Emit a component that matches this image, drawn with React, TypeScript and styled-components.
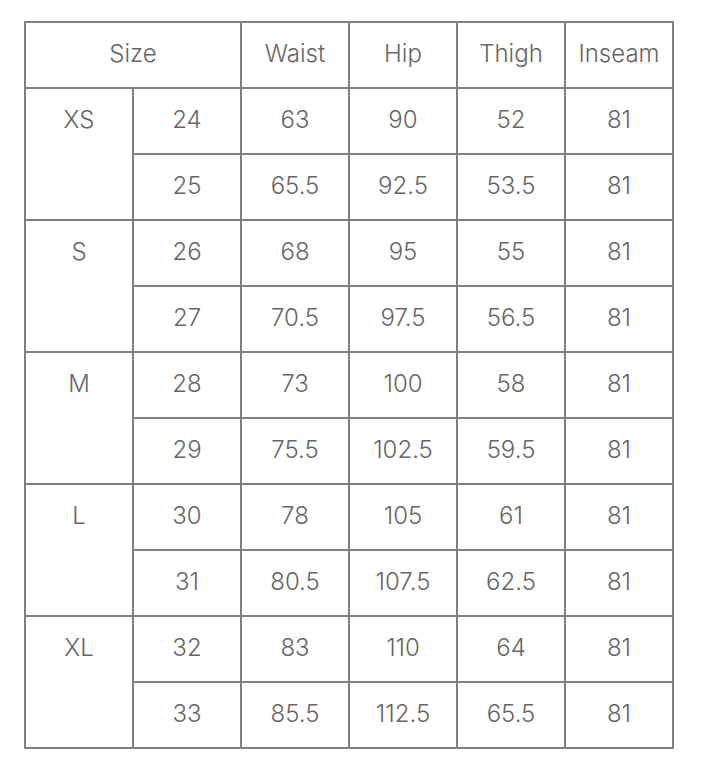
import React from 'react';
import styled, { createGlobalStyle } from 'styled-components';

const GlobalStyle = createGlobalStyle`
  html, body {
    margin: 0;
    padding: 0;
    background: #ffffff;
  }
  body {
    font-family: Inter, "Open Sans", sans-serif;
  }
`;

const Page = styled.div`
  padding: 21px 0 0 24px;
`;

const SizeTable = styled.table`
  border-collapse: separate;
  border-spacing: 0;
  border-top: 2px solid #808080;
  border-left: 2px solid #808080;
  table-layout: fixed;
  width: 650px;
`;

const Col = styled.col`
  width: 108px;
`;

const Cell = styled.td`
  height: 62px;
  padding: 0 0 2px 0;
  box-sizing: content-box;
  border-right: 2px solid #808080;
  border-bottom: 2px solid #808080;
  text-align: center;
  vertical-align: top;
  font-size: 24px;
  line-height: 62px;
  font-weight: 300;
  color: #666666;
  white-space: nowrap;
`;

const HeadCell = styled(Cell).attrs({ as: 'th' })`
  font-weight: 300;
`;

type Row = { fit: number; waist: string; hip: string; thigh: string; inseam: string };

const groups: { label: string; rows: Row[] }[] = [
  {
    label: 'XS',
    rows: [
      { fit: 24, waist: '63', hip: '90', thigh: '52', inseam: '81' },
      { fit: 25, waist: '65.5', hip: '92.5', thigh: '53.5', inseam: '81' },
    ],
  },
  {
    label: 'S',
    rows: [
      { fit: 26, waist: '68', hip: '95', thigh: '55', inseam: '81' },
      { fit: 27, waist: '70.5', hip: '97.5', thigh: '56.5', inseam: '81' },
    ],
  },
  {
    label: 'M',
    rows: [
      { fit: 28, waist: '73', hip: '100', thigh: '58', inseam: '81' },
      { fit: 29, waist: '75.5', hip: '102.5', thigh: '59.5', inseam: '81' },
    ],
  },
  {
    label: 'L',
    rows: [
      { fit: 30, waist: '78', hip: '105', thigh: '61', inseam: '81' },
      { fit: 31, waist: '80.5', hip: '107.5', thigh: '62.5', inseam: '81' },
    ],
  },
  {
    label: 'XL',
    rows: [
      { fit: 32, waist: '83', hip: '110', thigh: '64', inseam: '81' },
      { fit: 33, waist: '85.5', hip: '112.5', thigh: '65.5', inseam: '81' },
    ],
  },
];

const App: React.FC = () => {
  return (
    <Page>
      <GlobalStyle />
      <SizeTable>
        <colgroup>
          {Array.from({ length: 6 }).map((_, i) => (
            <Col key={i} />
          ))}
        </colgroup>
        <thead>
          <tr>
            <HeadCell colSpan={2}>Size</HeadCell>
            <HeadCell>Waist</HeadCell>
            <HeadCell>Hip</HeadCell>
            <HeadCell>Thigh</HeadCell>
            <HeadCell>Inseam</HeadCell>
          </tr>
        </thead>
        <tbody>
          {groups.map(group =>
            group.rows.map((row, i) => (
              <tr key={row.fit}>
                {i === 0 && <Cell rowSpan={group.rows.length}>{group.label}</Cell>}
                <Cell>{row.fit}</Cell>
                <Cell>{row.waist}</Cell>
                <Cell>{row.hip}</Cell>
                <Cell>{row.thigh}</Cell>
                <Cell>{row.inseam}</Cell>
              </tr>
            ))
          )}
        </tbody>
      </SizeTable>
    </Page>
  );
};

export default App;
